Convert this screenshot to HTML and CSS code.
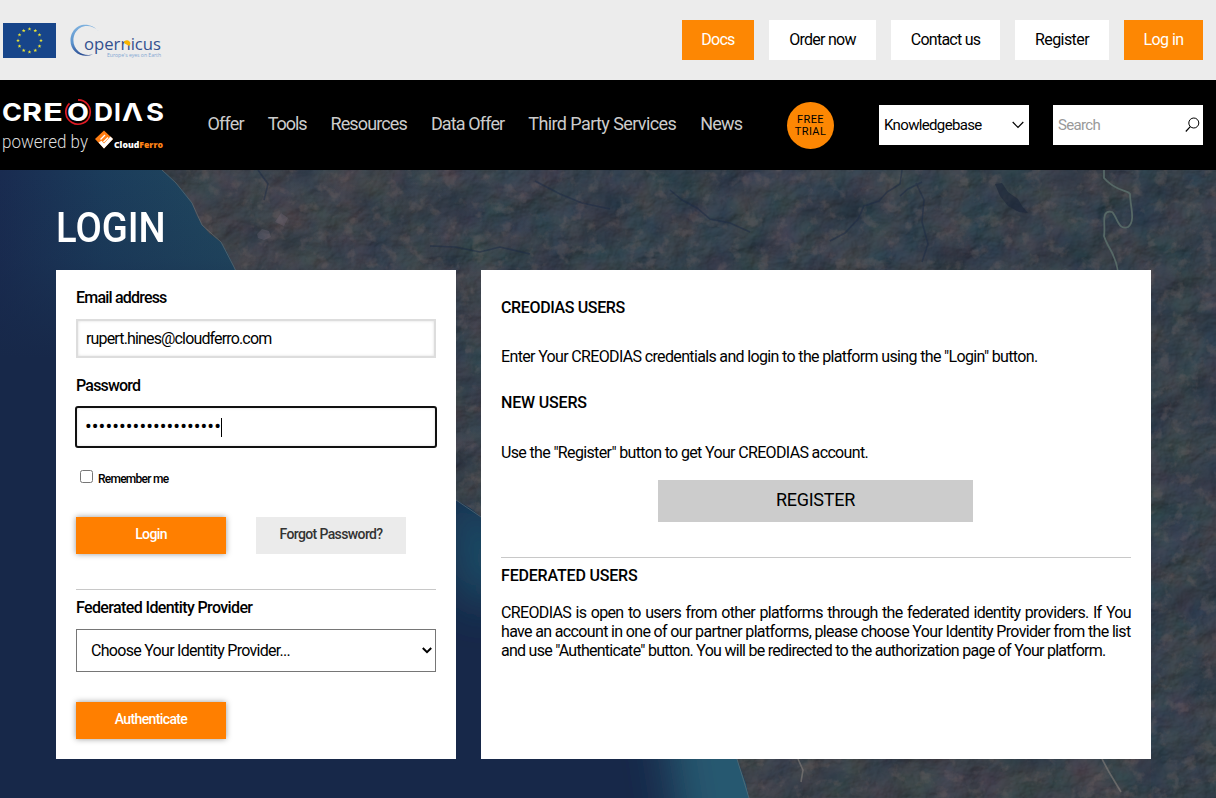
FILE: index.html
```html
<!DOCTYPE html>
<html lang="en">
<head>
<meta charset="utf-8">
<title>CREODIAS Login</title>
<link rel="stylesheet" href="styles.css">
</head>
<body>
<header class="topbar">
  <div class="partners">
    <svg class="eu" width="53" height="35" viewBox="0 0 53 35" aria-label="European Union">
      <rect width="53" height="35" fill="#17458a"/>
      <defs><path id="star" d="M0-1.9.5-.6 1.9-.6.8.3 1.2 1.6 0 .8-1.2 1.6-.8.3-1.9-.6-.5-.6Z" fill="#e8e337"/></defs>
      <use href="#star" x="26.5" y="6"/><use href="#star" x="32.3" y="7.6"/><use href="#star" x="36.5" y="11.8"/>
      <use href="#star" x="38" y="17.5"/><use href="#star" x="36.5" y="23.2"/><use href="#star" x="32.3" y="27.4"/>
      <use href="#star" x="26.5" y="29"/><use href="#star" x="20.7" y="27.4"/><use href="#star" x="16.5" y="23.2"/>
      <use href="#star" x="15" y="17.5"/><use href="#star" x="16.5" y="11.8"/><use href="#star" x="20.7" y="7.6"/>
    </svg>
    <svg class="copernicus" width="94" height="39" viewBox="0 -2 94 39">
      <defs><linearGradient id="arc" x1="0" y1="0" x2="0" y2="1"><stop offset="0" stop-color="#7fb2df"/><stop offset=".6" stop-color="#5b92cc"/><stop offset="1" stop-color="#294b91"/></linearGradient></defs>
      <path d="M29 8.500C24 2 15 0 9 3-1 8-2 22 5 28.500c5 5 12 5 18 3-6 1-11 .3-14.500-3C1 22 2 10 10 5c6-3.500 14-2 19 3.500Z" fill="url(#arc)"/>
      <text x="14" y="27" class="cop-name" textLength="77" lengthAdjust="spacingAndGlyphs">opernicus</text>
      <path d="M54 18.500C57 16 60 17.500 60.500 20.500L59.500 23 54.500 20.500Z" fill="#f8b500"/>
      <text x="37" y="33.500" class="cop-tag" textLength="54" lengthAdjust="spacingAndGlyphs">Europe's eyes on Earth</text>
    </svg>
  </div>
  <nav class="actions">
    <a class="action orange w72"><span class="t-docs">Docs</span></a>
    <a class="action w107"><span class="t-order">Order now</span></a>
    <a class="action w109"><span class="t-contact">Contact us</span></a>
    <a class="action w94"><span class="t-reg">Register</span></a>
    <a class="action orange w79"><span class="t-log">Log in</span></a>
  </nav>
</header>

<div class="mainbar">
  <svg class="brand" width="165" height="60" viewBox="0 0 165 60">
    <g class="brand-name">
      <text x="2" y="26" textLength="20" lengthAdjust="spacingAndGlyphs">C</text>
      <text x="22" y="26" textLength="20" lengthAdjust="spacingAndGlyphs">R</text>
      <text x="43" y="26" textLength="20" lengthAdjust="spacingAndGlyphs">E</text>
      <text x="67" y="26" textLength="22" lengthAdjust="spacingAndGlyphs">O</text>
      <text x="94" y="26" textLength="19" lengthAdjust="spacingAndGlyphs">D</text>
      <text x="114" y="26">I</text>
      <text x="122" y="26" textLength="21" lengthAdjust="spacingAndGlyphs">Λ</text>
      <text x="146" y="26" textLength="18" lengthAdjust="spacingAndGlyphs">S</text>
    </g>
    <path d="M78 4.800A12.200 12.200 0 1 1 69.500 8.300" fill="none" stroke="#e01b24" stroke-width="1.700"/>
    <text x="2" y="53" class="brand-by" textLength="86" lengthAdjust="spacingAndGlyphs">powered by</text>
    <path d="M104 35.500 113 44 104 53.500 95 44Z" fill="#ff7d12"/>
    <path d="M98.500 47.500 104 53.500 113 44 110.500 41.500 104 48.500 101.500 45.800Z" fill="#fff"/>
    <path d="M100.500 44.500 105 40M103.500 47 108 42.500" stroke="#fff" stroke-width="1.400"/>
    <text x="114" y="53" class="cf" textLength="49" lengthAdjust="spacingAndGlyphs"><tspan fill="#fff">Cloud</tspan><tspan fill="#ff8417">Ferro</tspan></text>
  </svg>
  <nav class="menu">
    <a class="m1">Offer</a><a class="m2">Tools</a><a class="m3">Resources</a><a class="m4">Data Offer</a><a class="m5">Third Party Services</a><a class="m6">News</a>
  </nav>
  <div class="tools">
    <a class="trial"><span>FREE</span><span>TRIAL</span></a>
    <div class="box kb"><span>Knowledgebase</span>
      <svg width="12" height="8" viewBox="0 0 12 8"><path d="M.7 1 6 6.500 11.300 1" fill="none" stroke="#000" stroke-width="1.200"/></svg></div>
    <div class="box search"><span>Search</span>
      <svg width="15" height="16" viewBox="0 0 15 16"><circle cx="8.800" cy="6" r="5" fill="none" stroke="#000"/><path d="M5.300 9.700.8 14.500" stroke="#000" stroke-width="1.200"/></svg></div>
  </div>
</div>

<main class="hero">
  <svg class="terrain" width="1216" height="628" viewBox="0 170 1216 628" preserveAspectRatio="none" aria-hidden="true">
    <defs>
      <filter id="relief" x="0" y="0" width="100%" height="100%" color-interpolation-filters="sRGB">
        <feTurbulence type="fractalNoise" baseFrequency=".018 .022" numOctaves="6" seed="8" result="n"/>
        <feDiffuseLighting in="n" surfaceScale="6.500" diffuseConstant="1.150" lighting-color="#3a4652" result="light"><feDistantLight azimuth="225" elevation="58"/></feDiffuseLighting>
        <feTurbulence type="fractalNoise" baseFrequency=".03" numOctaves="5" seed="31"/>
        <feColorMatrix values=".36 0 0 0 .03  .06 .16 0 0 .13  0 0 .1 0 .22  0 0 0 0 1" result="tint"/>
        <feComposite in="light" in2="tint" operator="arithmetic" k1="0" k2=".6" k3=".4" k4="0"/>
      </filter>
      <filter id="shade" x="0" y="0" width="100%" height="100%" color-interpolation-filters="sRGB">
        <feTurbulence type="fractalNoise" baseFrequency=".016 .026" numOctaves="5" seed="14"/>
        <feColorMatrix values="0 0 0 0 .13  0 0 0 0 .17  0 0 0 0 .24  0 3 0 0 -1.450"/>
      </filter>
      <filter id="specks" x="0" y="0" width="100%" height="100%" color-interpolation-filters="sRGB">
        <feTurbulence type="fractalNoise" baseFrequency=".07" numOctaves="4" seed="5"/>
        <feColorMatrix values="0 0 0 0 .5  0 0 0 0 .43  0 0 0 0 .42  5 0 0 0 -2.800"/>
      </filter>
      <filter id="soft" filterUnits="userSpaceOnUse" x="300" y="300" width="700" height="600"><feGaussianBlur stdDeviation="22"/></filter>
      <linearGradient id="sea" x1="0" y1="0" x2="1" y2="0"><stop offset="0" stop-color="#192b50"/><stop offset=".4" stop-color="#1b3c5b"/><stop offset="1" stop-color="#224b60"/></linearGradient>
      <linearGradient id="depth" x1="0" y1="0" x2="0" y2="1"><stop offset="0" stop-color="#172849" stop-opacity="0"/><stop offset=".14" stop-color="#172849" stop-opacity=".2"/><stop offset=".3" stop-color="#172849"/></linearGradient>
      <linearGradient id="warmfade"><stop offset="0" stop-color="#6a4a48" stop-opacity=".25"/><stop offset=".45" stop-color="#6a4a48" stop-opacity="0"/></linearGradient>
      <clipPath id="water"><path d="M0 170H162L168 175 176 183 184 192 192 203 196 214 202 225 210 234 221 242 228 254 234 267 240 280C300 390 390 450 456 500L470 508 481 517C580 590 700 650 737 759L741 770 746 784 749 798H0Z"/></clipPath>
    </defs>
    <rect y="170" width="1216" height="628" filter="url(#relief)"/>
    <rect y="170" width="1216" height="628" fill="url(#warmfade)"/>
    <rect x="740" y="700" width="411" height="98" fill="#6a4a48" opacity=".1"/>
    <g opacity=".35"><rect y="170" width="1216" height="628" filter="url(#shade)"/></g>
    <g opacity=".25"><rect y="170" width="1216" height="628" filter="url(#specks)"/></g>
    <g fill="none" stroke="#1c2943" stroke-opacity=".5" stroke-width="1.600">
      <path d="M902 170 900 184 887 192 879 201 864 206 858 219 845 233 830 241M922 182 908 189 900 196M916 183 924 200 922 222 928 244 922 262M670 190 682 200 697 208 710 219 730 223 750 232M258 170 268 184 264 200M535 181 560 194 582 203 610 209M430 246 455 247 480 252 500 247 530 254"/>
    </g>
    <path d="M995 184 1002 183 1008 192 1018 199 1022 206 1028 213 1019 212 1008 206 1000 196Z" fill="#1b2538" opacity=".6"/>
    <path d="M257 234 262 229 269 231 271 237 264 240 258 238ZM275 222 281 213 288 218 284 226Z" fill="#7a7080" opacity=".3"/>
    <path d="M1104 170V178C1115 191 1127 190 1130 194 1130 206 1136 221 1128 227 1118 231 1117 216 1112 212 1100 209 1106 226 1104 236 1108 249 1116 254 1118 272" fill="none" stroke="#566866" stroke-width="1.800"/>
    <path d="M1102 759 1109 772 1121 792M798 759 803 770 801 782" fill="none" stroke="#85817d" stroke-width="1.600" opacity=".6"/>
    <g clip-path="url(#water)">
      <rect y="170" width="260" height="628" fill="url(#sea)"/>
      <rect y="170" width="260" height="628" fill="url(#depth)"/>
      <rect x="240" y="170" width="600" height="628" fill="#172849"/>
      <path d="M450 490 485 505 530 570 480 610 456 580Z" fill="#1f4d66" filter="url(#soft)"/>
      <path d="M820 640V890H690L660 700Z" fill="#26586f" filter="url(#soft)"/>
    </g>
    <path d="M162 170 176 183 192 203 202 225 221 242 234 267 240 280M456 500 481 517M737 759 749 798" fill="none" stroke="#66747a" stroke-width="1" opacity=".6"/>
  </svg>
  <div class="content">
    <h1><span>LOGIN</span></h1>
    <div class="cards">
      <form class="card login">
        <label class="label l1">Email address</label>
        <div class="field"><span>rupert.hines@cloudferro.com</span></div>
        <label class="label l2">Password</label>
        <div class="field focus"><span class="dots">••••••••••••••••••••</span><i class="caret"></i></div>
        <div class="remember"><i class="check"></i><span>Remember me</span></div>
        <div class="row"><a class="btn primary b1"><span>Login</span></a><a class="btn b2"><span>Forgot Password?</span></a></div>
        <div class="rule"></div>
        <label class="label l3">Federated Identity Provider</label>
        <div class="select"><span>Choose Your Identity Provider...</span>
          <svg width="10" height="7" viewBox="0 0 10 7"><path d="M.8 1 5 5.200 9.200 1" fill="none" stroke="#000" stroke-width="2"/></svg></div>
        <a class="btn primary b3"><span>Authenticate</span></a>
      </form>
      <section class="card info">
        <h2 class="h-a">CREODIAS USERS</h2>
        <p class="p-a">Enter Your CREODIAS credentials and login to the platform using the "Login" button.</p>
        <h2 class="h-b">NEW USERS</h2>
        <p class="p-b">Use the "Register" button to get Your CREODIAS account.</p>
        <a class="register"><span>REGISTER</span></a>
        <div class="rule"></div>
        <h2 class="h-c">FEDERATED USERS</h2>
        <div class="para">
          <p class="q1">CREODIAS is open to users from other platforms through the federated identity providers. If You</p>
          <p class="q2">have an account in one of our partner platforms, please choose Your Identity Provider from the list</p>
          <p class="q3">and use "Authenticate" button. You will be redirected to the authorization page of Your platform.</p>
        </div>
      </section>
    </div>
  </div>
</main>
</body>
</html>
```
FILE: styles.css
```css
* { box-sizing: border-box; }
body { margin: 0; width: 1216px; height: 798px; overflow: hidden; font-family: Roboto, "Liberation Sans", sans-serif; font-size: 16px; color: #000; }
h1, h2, p { margin: 0; font-weight: inherit; }
span, a, p, h2, label { white-space: nowrap; }
svg { display: block; flex: none; }

.topbar { height: 80px; background: #ececec; display: flex; justify-content: space-between; align-items: center; padding: 0 13px 0 3px; }
.partners { display: flex; align-items: center; gap: 14px; }
.cop-name { font: 17px "Open Sans", sans-serif; fill: #33508f; }
.cop-tag { font: 5px "Open Sans", sans-serif; fill: #7fa6d2; }
.actions { display: flex; gap: 15px; }
.action { height: 40px; background: #fff; display: flex; align-items: center; justify-content: center; letter-spacing: -.75px; padding-bottom: 2px; }
.orange { background: #fd8703; color: #fff; }
.t-reg, .t-log { letter-spacing: -.55px; }
.w72 { width: 72px; } .w107 { width: 107px; } .w109 { width: 109px; } .w94 { width: 94px; } .w79 { width: 79px; }

.mainbar { height: 90px; background: #000; display: flex; align-items: center; padding: 0 13px 0 0; }
.brand { align-self: flex-start; margin-top: 15px; }
.brand-name { font: 700 24.500px Inter, sans-serif; fill: #fff; }
.brand-by { font: 300 18px Roboto, sans-serif; fill: #ddd; }
.cf { font: 900 9.500px "Open Sans", sans-serif; }
.menu { display: flex; gap: 24px; margin-left: 42.500px; font-size: 18px; color: #ccc; line-height: 24px; margin-bottom: 2px; }
.menu a { display: block; letter-spacing: -.8px; }
.menu .m2 { letter-spacing: -1.100px; }
.menu .m3, .menu .m4 { letter-spacing: -.87px; }
.menu .m5 { letter-spacing: -.6px; }
.tools { display: flex; align-items: center; margin-left: auto; }
.trial { width: 47px; height: 47px; border-radius: 50%; background: #fd8703; display: flex; flex-direction: column; align-items: center; justify-content: center; font-size: 11px; line-height: 12px; letter-spacing: .4px; padding-top: 2px; margin-right: 45px; }
.box { width: 150px; height: 40px; background: #fff; display: flex; align-items: center; justify-content: space-between; padding: 0 5px; font-size: 15px; letter-spacing: -.65px; }
.search { margin-left: 24px; color: #999; padding-right: 3px; }

.hero { height: 628px; display: grid; overflow: hidden; }
.terrain, .content { grid-area: 1 / 1; }
.content { z-index: 1; padding: 32px 65px 0 56px; }
h1 { height: 68px; font-size: 42px; line-height: 52px; font-weight: 500; color: #fff; }
h1 span { display: inline-block; transform: scaleX(.91); transform-origin: 0 0; }
.cards { display: flex; justify-content: space-between; }
.card { height: 489px; background: #fff; padding: 20px; display: flex; flex-direction: column; align-items: flex-start; }
.login { width: 400px; }
.info { width: 670px; letter-spacing: -.65px; }
.label { display: block; font-weight: 500; line-height: 16px; letter-spacing: -.8px; }
.field { width: 360px; height: 39px; margin: 13px 0 20px; border: 2px solid #ddd; box-shadow: inset 0 0 3px #ddd; padding: 0 8px; display: flex; align-items: center; letter-spacing: -.85px; }
.focus { width: 362px; height: 42px; margin: 12px 0 22px -1px; border: 2px solid #111; border-radius: 3px; padding: 0 9px; letter-spacing: .05px; }
.dots { font-size: 20px; line-height: 20px; margin: -2px 0 0 -1px; }
.caret { width: 1px; height: 19px; background: #000; }
.remember { display: flex; height: 13px; margin-left: 4px; gap: 5px; font-size: 12px; font-weight: 500; line-height: 18px; letter-spacing: -.75px; }
.check { width: 13px; height: 13px; border: 1px solid #767676; border-radius: 2.500px; }
.row { display: flex; gap: 30px; margin-top: 34px; }
.btn { display: flex; width: 150px; height: 37px; background: #ebebeb; color: #333; justify-content: center; font-size: 14px; font-weight: 500; line-height: 35px; letter-spacing: -.62px; }
.primary { background: #ff7f00; color: #fff; box-shadow: 0 0 6px rgba(0,0,0,.4); }
.rule { width: 100%; height: 1px; background: #c8c8c8; margin-top: 35px; }
.l3 { margin-top: 10px; letter-spacing: -.62px; }
.select { width: 360px; height: 43px; border: 1px solid #767676; margin: 13px 0 30px; padding: 0 3px 0 14px; display: flex; align-items: center; justify-content: space-between; letter-spacing: -.71px; }
.info h2 { font-size: 16px; font-weight: 500; line-height: 20px; letter-spacing: -.36px; }
.info .h-b, .info .h-c { letter-spacing: -.18px; }
.h-a { margin-top: 8px; }
.p-a, .p-b { line-height: 20px; margin-top: 29px; }
.h-b { margin-top: 26px; }
.p-b { margin-top: 30px; }
.register { width: 315px; height: 42px; margin: 17px 0 0 157px; background: #ccc; display: flex; justify-content: center; font-size: 18px; line-height: 40px; letter-spacing: -.25px; }
.h-c { margin-top: 8px; }
.para { width: 630px; margin-top: 17px; line-height: 19px; }
.q1 { white-space: normal; text-align: justify; text-align-last: justify; }
.q3 { letter-spacing: -.73px; }
```
